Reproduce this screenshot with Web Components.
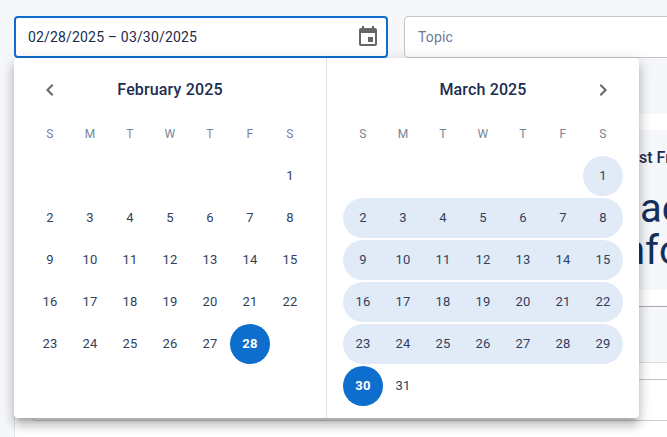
<!DOCTYPE html>
<html>
<head>
<meta charset="utf-8">
<title>Date range</title>
<style>
  html, body { margin: 0; height: 100%; overflow: hidden; background: #f5f7fa; }
  body { font-family: Roboto, "Liberation Sans", sans-serif; }
</style>
</head>
<body>
<report-page>
  <filter-bar slot="filters">
    <date-field value="02/28/2025 – 03/30/2025">
      <range-picker></range-picker>
    </date-field>
    <text-field placeholder="Topic"></text-field>
  </filter-bar>
  <report-body slot="content"></report-body>
</report-page>

<script>
class ReportPage extends HTMLElement {
  constructor() {
    super()
    this.attachShadow({ mode: "open" })
    this.shadowRoot.innerHTML = `
      <style>
        :host { display: flex; flex-direction: column; gap: 56px; width: 900px; height: 437px; padding: 16px 0 0 14px; box-sizing: border-box; }
      </style>
      <slot name="filters"></slot>
      <slot name="content"></slot>
    `
  }
}

class FilterBar extends HTMLElement {
  constructor() {
    super()
    this.attachShadow({ mode: "open" })
    this.shadowRoot.innerHTML = `
      <style>
        :host { display: flex; gap: 16px; position: relative; z-index: 2; }
      </style>
      <slot></slot>
    `
  }
}

class DateField extends HTMLElement {
  constructor() {
    super()
    this.attachShadow({ mode: "open" })
    this.shadowRoot.innerHTML = `
      <style>
        :host { display: block; position: relative; flex: 0 0 374px; height: 42px; }
        .box {
          display: flex; align-items: center; justify-content: space-between;
          height: 100%; box-sizing: border-box; padding: 0 6px 0 12px;
          background: #fff; border: 2px solid #0d6ecd; border-radius: 4px;
          font-size: 14px; letter-spacing: 0.17px; color: #1b2b4b;
        }
        svg { width: 24px; height: 24px; fill: #666; display: block; }
        .pop { position: absolute; left: 0; top: 100%; }
      </style>
      <div class="box">
        <span class="value"></span>
        <svg viewBox="0 0 24 24"><path d="M17 12h-5v5h5v-5zM16 1v2H8V1H6v2H5c-1.11 0-1.99.9-1.99 2L3 19c0 1.1.89 2 2 2h14c1.1 0 2-.9 2-2V5c0-1.1-.9-2-2-2h-1V1h-2zm3 18H5V8h14v11z"/></svg>
      </div>
      <div class="pop"><slot></slot></div>
    `
    this.shadowRoot.querySelector(".value").textContent = this.getAttribute("value")
  }
}

class TextField extends HTMLElement {
  constructor() {
    super()
    this.attachShadow({ mode: "open" })
    this.shadowRoot.innerHTML = `
      <style>
        :host { display: block; flex: 0 0 400px; height: 42px; }
        .box {
          display: flex; align-items: center; height: 100%; box-sizing: border-box;
          padding: 0 13px; background: #fff; border: 1px solid #c4c4c4; border-radius: 4px;
          font-size: 14px; letter-spacing: 0.17px; color: #6d7a90;
        }
      </style>
      <div class="box"></div>
    `
    this.shadowRoot.querySelector(".box").textContent = this.getAttribute("placeholder")
  }
}

class RangePicker extends HTMLElement {
  constructor() {
    super()
    this.attachShadow({ mode: "open" })
    this.shadowRoot.innerHTML = `
      <style>
        :host {
          display: flex; width: 625px; height: 360px; background: #fff; border-radius: 4px;
          box-shadow: 0 5px 5px -3px rgba(0,0,0,.2), 0 8px 10px 1px rgba(0,0,0,.14), 0 3px 14px 2px rgba(0,0,0,.12);
        }
        cal-month + cal-month { border-left: 1px solid #e0e0e0; }
      </style>
      <cal-month title="February 2025" offset="6" days="28" start="28" nav="prev"></cal-month>
      <cal-month title="March 2025" offset="6" days="31" end="30" nav="next"></cal-month>
    `
  }
}

class CalMonth extends HTMLElement {
  connectedCallback() {
    if (this.shadowRoot) return
    this.attachShadow({ mode: "open" })
    const offset = +this.getAttribute("offset")
    const days = +this.getAttribute("days")
    const start = +this.getAttribute("start")
    const end = +this.getAttribute("end")
    const nav = this.getAttribute("nav")
    const chevrons = {
      prev: "M15.41 7.41 14 6l-6 6 6 6 1.41-1.41L10.83 12z",
      next: "M10 6 8.59 7.41 13.17 12l-4.58 4.59L10 18l6-6z",
    }

    let cells = ""
    for (let i = 0; i < offset; i++) cells += `<span></span>`
    for (let d = 1; d <= days; d++) {
      const col = (offset + d - 1) % 7
      let cls = ""
      if (d === start || d === end) cls = "selected"
      else if (end && d < end) {
        cls = "range"
        if (col === 0 || d === 1) cls += " first"
        if (col === 6 || d === days) cls += " last"
      }
      cells += `<span class="day ${cls}"><b>${d}</b></span>`
    }

    this.shadowRoot.innerHTML = `
      <style>
        :host { display: block; flex: 1; box-sizing: border-box; padding: 13px 16px 0; }
        .head { display: flex; align-items: center; justify-content: center; position: relative; height: 36px; font-size: 16px; font-weight: 500; letter-spacing: .15px; color: #1c2d52; }
        .nav { position: absolute; top: 7px; width: 24px; height: 24px; fill: #666; }
        .nav.prev { left: 8px; }
        .nav.next { right: 8px; }
        .grid { display: grid; grid-template-columns: repeat(7, 40px); }
        .weeks { height: 34px; margin-top: 10px; align-items: center; font-size: 12px; letter-spacing: .2px; color: #78849a; text-align: center; }
        .weeks span { line-height: 24px; }
        .days { grid-auto-rows: 40px; row-gap: 2px; margin-top: 5px; font-size: 13px; letter-spacing: .2px; color: #33405c; }
        .day { display: flex; align-items: center; justify-content: center; box-sizing: border-box; padding-bottom: 2px; }
        .day b { font-weight: 400; }
        .range { background: #e1ebf8; }
        .first { border-radius: 20px 0 0 20px; }
        .last { border-radius: 0 20px 20px 0; }
        .first.last { border-radius: 50%; }
        .selected { background: #0d6ecd; border-radius: 50%; color: #fff; }
        .selected b { font-weight: 700; }
      </style>
      <div class="head">
        <svg class="nav ${nav}" viewBox="0 0 24 24"><path d="${chevrons[nav]}"/></svg>
        <span>${this.getAttribute("title")}</span>
      </div>
      <div class="grid weeks">${["S","M","T","W","T","F","S"].map(w => `<span>${w}</span>`).join("")}</div>
      <div class="grid days">${cells}</div>
    `
  }
}

class ReportBody extends HTMLElement {
  constructor() {
    super()
    this.attachShadow({ mode: "open" })
    this.shadowRoot.innerHTML = `
      <style>
        :host { display: block; flex: 1; background: #fff; border-left: 1px solid #e3e5e8; padding: 16px 0 0 17px; color: #1b2b4b; }
        .hero { height: 160px; box-sizing: border-box; padding: 17px 0 0 607px; background: #f5f7fa; overflow: hidden; white-space: nowrap; }
        .kicker { font-size: 16px; font-weight: 500; line-height: 22px; }
        .big { font-size: 40px; line-height: 42px; margin: 19px 0 0 1px; color: #14315e; }
        .big span { display: block; }
        .big span + span { margin-left: -17px; }
        .table { margin-top: 16px; border-top: 1px solid #a9a9a9; }
        .thead { height: 55px; background: #f5f7fa; border-bottom: 1px solid #dcdcdc; }
        .row-a { height: 16px; border-bottom: 1px solid #c2c2c2; }
        .row-b { height: 40px; border-bottom: 1px solid #cfcfcf; border-radius: 0 0 0 4px; }
      </style>
      <div class="hero">
        <div class="kicker">st Fr</div>
        <div class="big"><span>ac</span><span>nfo</span></div>
      </div>
      <div class="table">
        <div class="thead"></div>
        <div class="row-a"></div>
        <div class="row-b"></div>
      </div>
    `
  }
}

customElements.define("report-page", ReportPage)
customElements.define("filter-bar", FilterBar)
customElements.define("date-field", DateField)
customElements.define("text-field", TextField)
customElements.define("cal-month", CalMonth)
customElements.define("range-picker", RangePicker)
customElements.define("report-body", ReportBody)
</script>
</body>
</html>
